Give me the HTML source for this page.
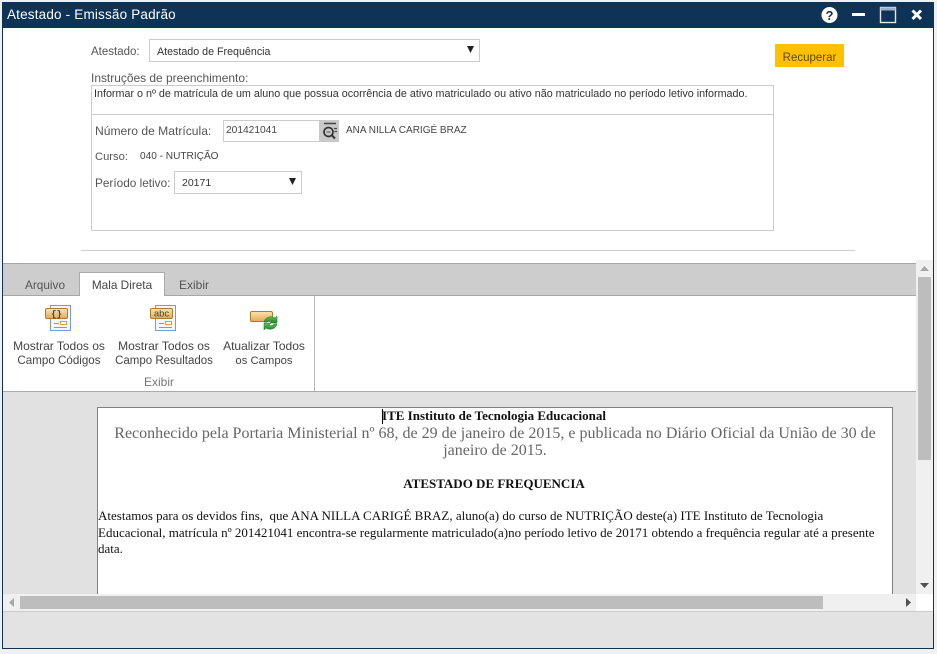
<!DOCTYPE html>
<html lang="pt">
<head>
<meta charset="utf-8">
<title>Atestado - Emissão Padrão</title>
<style>
html,body{margin:0;padding:0;width:937px;height:654px;overflow:hidden;background:#f0f0f0}
body{position:relative;font-family:"Liberation Sans",sans-serif;color:#444}
.a{position:absolute;box-sizing:border-box}
.t{position:absolute;white-space:nowrap;line-height:14px;font-size:11.5px}
.s{font-family:"Liberation Serif",serif;color:#111;white-space:nowrap;position:absolute}
.c{text-align:center}
</style>
</head>
<body>
<!-- window -->
<div class="a" style="left:2px;top:2px;width:932px;height:647px;background:#fff;border:1px solid #0f3357"></div>
<div class="a" style="left:2px;top:2px;width:932px;height:26px;background:#0f3357"></div>
<div class="t" style="left:7px;top:7px;color:#fff;font-size:13.5px;letter-spacing:.18px;line-height:16px">Atestado - Emissão Padrão</div>

<!-- title icons -->
<svg class="a" style="left:815px;top:2px" width="115" height="26" viewBox="0 0 115 26">
<circle cx="14.5" cy="13" r="8" fill="#fff"/>
<text x="14.5" y="18" text-anchor="middle" font-family="Liberation Sans" font-weight="bold" font-size="13" fill="#0f3357">?</text>
<rect x="37" y="11" width="13" height="3" fill="#fff"/>
<rect x="65.500" y="5.500" width="15" height="15" fill="none" stroke="#dfe6ee" stroke-width="1.400"/>
<rect x="65.500" y="5.500" width="15" height="3" fill="#9fb0c2"/>
<path d="M97.500 8.500l8.500 8.500M106 8.500l-8.500 8.500" stroke="#fff" stroke-width="3" fill="none"/>
</svg>

<!-- top form -->
<div class="t" style="left:91px;top:45px;color:#555">Atestado:</div>
<div class="a" style="left:149px;top:39px;width:331px;height:23px;border:1px solid #ccc;background:#fff"></div>
<div class="t" style="left:157px;top:45px;color:#333;font-size:10.700px">Atestado de Frequência</div>
<svg class="a" style="left:467px;top:46px" width="7" height="7"><path d="M0 0h7L3.500 7z" fill="#222"/></svg>
<div class="a" style="left:775px;top:44px;width:69px;height:23px;background:#ffc000"></div>
<div class="t c" style="left:775px;top:51px;width:69px;color:#5a4a10;font-size:11.500px">Recuperar</div>

<div class="t" style="left:91px;top:71px;color:#555;font-size:11.950px">Instruções de preenchimento:</div>
<div class="a" style="left:91px;top:85px;width:683px;height:146px;border:1px solid #ccc"></div>
<div class="a" style="left:92px;top:114px;width:681px;height:1px;background:#ccc"></div>
<div class="t" style="left:94px;top:87px;color:#333;font-size:10.760px">Informar o nº de matrícula de um aluno que possua ocorrência de ativo matriculado ou ativo não matriculado no período letivo informado.</div>

<div class="t" style="left:95px;top:124px;color:#555;font-size:12.100px">Número de Matrícula:</div>
<div class="a" style="left:223px;top:120px;width:97px;height:22px;border:1px solid #ccc;background:#fff"></div>
<div class="t" style="left:226px;top:124px;color:#444;font-size:10.200px">201421041</div>
<div class="a" style="left:319px;top:120px;width:20px;height:22px;background:#c9c9c9"></div>
<svg class="a" style="left:319px;top:120px" width="20" height="22" viewBox="0 0 20 22">
<path d="M5 3.500h12" stroke="#444" stroke-width="1.500" fill="none"/>
<circle cx="9.500" cy="12" r="4.500" fill="none" stroke="#333" stroke-width="1.700"/>
<path d="M7.500 12h4" stroke="#555"/>
<path d="M13 15.500l3 3" stroke="#333" stroke-width="2" fill="none"/>
<path d="M15 8.500h3M15.500 11.500h2.500" stroke="#444" stroke-width="1.300" fill="none"/>
</svg>
<div class="t" style="left:346px;top:124px;color:#444;font-size:10px">ANA NILLA CARIGÉ BRAZ</div>

<div class="t" style="left:95px;top:150px;color:#555;font-size:11.200px">Curso:</div>
<div class="t" style="left:140px;top:150px;color:#444;font-size:10.100px">040 - NUTRIÇÃO</div>

<div class="t" style="left:95px;top:176px;color:#555;font-size:11.800px">Período letivo:</div>
<div class="a" style="left:174px;top:171px;width:128px;height:23px;border:1px solid #ccc;background:#fff"></div>
<div class="t" style="left:182px;top:176px;color:#333;font-size:10.500px">20171</div>
<svg class="a" style="left:289px;top:178px" width="7" height="7"><path d="M0 0h7L3.500 7z" fill="#222"/></svg>

<div class="a" style="left:81px;top:250px;width:774px;height:1px;background:#ccc"></div>

<!-- ribbon -->
<div class="a" style="left:3px;top:263px;width:913px;height:33px;background:#cdcdcd;border-top:1px solid #a6a6a6;border-bottom:1px solid #a6a6a6"></div>
<div class="t" style="left:25px;top:278px;color:#555;font-size:11.800px">Arquivo</div>
<div class="a" style="left:79px;top:272px;width:86px;height:24px;background:#fff;border:1px solid #aaa;border-bottom:0"></div>
<div class="t c" style="left:79px;top:278px;width:86px;color:#444;font-size:11.800px">Mala Direta</div>
<div class="t" style="left:179px;top:278px;color:#555;font-size:12px">Exibir</div>
<div class="a" style="left:314px;top:296px;width:1px;height:95px;background:#bbb"></div>
<div class="a" style="left:3px;top:391px;width:913px;height:1px;background:#aaa"></div>

<!-- ribbon icons -->
<svg class="a" style="left:44px;top:304px" width="30" height="29" viewBox="0 0 30 29">
<defs>
<linearGradient id="o" x1="0" y1="0" x2="0" y2="1"><stop offset="0" stop-color="#fce5b0"/><stop offset="1" stop-color="#e0aa55"/></linearGradient>
<linearGradient id="g" x1="0" y1="0" x2="0" y2="1"><stop offset="0" stop-color="#68c24f"/><stop offset="1" stop-color="#1d8b2a"/></linearGradient>
</defs>
<rect x="6.500" y="1.500" width="20" height="25" fill="#f3f7fc" stroke="#6f9fd6"/>
<rect x="1.500" y="4.500" width="22" height="10" rx="1.500" fill="url(#o)" stroke="#b07a2c"/>
<text x="12.500" y="12.500" text-anchor="middle" font-family="Liberation Mono" font-weight="bold" font-size="9" fill="#444">{}</text>
<path d="M10 19.500h5M10 23.500h13" stroke="#6f9fd6" fill="none"/>
<rect x="16.500" y="17.500" width="6" height="3" fill="#fff" stroke="#e0a030"/>
</svg>
<svg class="a" style="left:149px;top:304px" width="30" height="29" viewBox="0 0 30 29">
<rect x="6.500" y="1.500" width="20" height="25" fill="#f3f7fc" stroke="#6f9fd6"/>
<rect x="1.500" y="4.500" width="22" height="10" rx="1.500" fill="url(#o)" stroke="#b07a2c"/>
<text x="12.500" y="12.500" text-anchor="middle" font-family="Liberation Sans" font-size="9.500" fill="#444">abc</text>
<path d="M10 19.500h5M10 23.500h13" stroke="#6f9fd6" fill="none"/>
<rect x="16.500" y="17.500" width="6" height="3" fill="#fff" stroke="#e0a030"/>
</svg>
<svg class="a" style="left:249px;top:309px" width="31" height="23" viewBox="0 0 31 23">
<rect x="1.500" y="2.500" width="22" height="10" rx="1.500" fill="url(#o)" stroke="#b07a2c"/>
<path d="M15 13a7 6.500 0 0 1 11-4l2-2v7h-7l2.300-2.200a4 3.800 0 0 0-5.300 1.200z" fill="url(#g)" stroke="#15701f" stroke-width=".5"/>
<path d="M28 15a7 6.500 0 0 1-11 4l-2 2v-7h7l-2.300 2.200a4 3.800 0 0 0 5.300-1.200z" fill="url(#g)" stroke="#15701f" stroke-width=".5"/>
</svg>

<div class="t c" style="left:4px;top:339px;width:110px;color:#444;font-size:12px">Mostrar Todos os</div>
<div class="t c" style="left:4px;top:354px;width:110px;color:#444;font-size:11.600px">Campo Códigos</div>
<div class="t c" style="left:109px;top:339px;width:110px;color:#444;font-size:12px">Mostrar Todos os</div>
<div class="t c" style="left:109px;top:354px;width:110px;color:#444;font-size:11.500px">Campo Resultados</div>
<div class="t c" style="left:209px;top:339px;width:110px;color:#444;font-size:12px">Atualizar Todos</div>
<div class="t c" style="left:209px;top:354px;width:110px;color:#444;font-size:11.300px">os Campos</div>
<div class="t c" style="left:104px;top:375px;width:110px;color:#777;font-size:12px">Exibir</div>

<!-- doc area -->
<div class="a" style="left:3px;top:392px;width:913px;height:202px;background:#e1e1e1"></div>
<div class="a" style="left:97px;top:407px;width:796px;height:187px;background:#fff;border:1px solid #808080;border-bottom:0"></div>
<div class="s c" style="left:97px;top:408px;width:794px;font-size:13px;line-height:16px;font-weight:bold">ITE Instituto de Tecnologia Educacional</div>
<div class="a" style="left:382px;top:409px;width:1px;height:15px;background:#000"></div>
<div class="s c" style="left:98px;top:425px;width:794px;font-size:16.020px;line-height:18px;color:#666">Reconhecido pela Portaria Ministerial nº 68, de 29 de janeiro de 2015, e publicada no Diário Oficial da União de 30 de</div>
<div class="s c" style="left:98px;top:442px;width:794px;font-size:16px;line-height:18px;color:#666">janeiro de 2015.</div>
<div class="s c" style="left:97px;top:476px;width:794px;font-size:13px;line-height:16px;font-weight:bold">ATESTADO DE FREQUENCIA</div>
<div class="s" style="left:98px;top:508px;font-size:13px;line-height:16px">Atestamos para os devidos fins,&nbsp; que ANA NILLA CARIGÉ BRAZ, aluno(a) do curso de NUTRIÇÃO deste(a) ITE Instituto de Tecnologia</div>
<div class="s" style="left:98px;top:525px;font-size:13px;line-height:16px">Educacional, matrícula nº 201421041 encontra-se regularmente matriculado(a)no período letivo de 20171 obtendo a frequência regular até a presente</div>
<div class="s" style="left:98px;top:541px;font-size:13px;line-height:16px">data.</div>

<!-- vertical scrollbar -->
<div class="a" style="left:916px;top:260px;width:17px;height:334px;background:#f0f0f0"></div>
<div class="a" style="left:918px;top:277px;width:13px;height:183px;background:#bdbdbd"></div>
<svg class="a" style="left:920px;top:266px" width="9" height="6"><path d="M0 5h9L4.500 0z" fill="#a6a6a6"/></svg>
<svg class="a" style="left:920px;top:583px" width="9" height="6"><path d="M0 0h9L4.500 5z" fill="#505050"/></svg>

<!-- horizontal scrollbar -->
<div class="a" style="left:3px;top:594px;width:913px;height:17px;background:#f0f0f0"></div>
<div class="a" style="left:20px;top:596px;width:803px;height:13px;background:#bdbdbd"></div>
<svg class="a" style="left:9px;top:598px" width="6" height="9"><path d="M5 0v9L0 4.500z" fill="#a6a6a6"/></svg>
<svg class="a" style="left:906px;top:598px" width="6" height="9"><path d="M0 0v9L5 4.500z" fill="#505050"/></svg>

<!-- footer -->
<div class="a" style="left:3px;top:611px;width:930px;height:37px;background:#e3e3e3;border-top:1px solid #ccc"></div>
</body>
</html>
